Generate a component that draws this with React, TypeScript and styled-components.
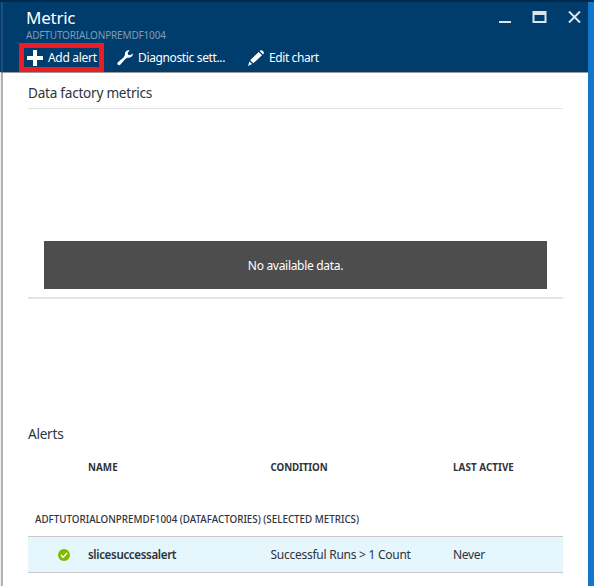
import React from "react";
import styled, { createGlobalStyle } from "styled-components";

const GlobalStyle = createGlobalStyle`
  * { box-sizing: border-box; }
  body { margin: 0; background: #fff; font-family: "Noto Sans", "Open Sans", sans-serif; overflow: hidden; }
`;

const Page = styled.div`
  display: grid;
  grid-template-columns: 1px 587px 6px;
  grid-template-rows: 2px 584px;
  width: 594px;
  height: 586px;
  background: #fff;
`;
const TopStrip = styled.div`
  grid-column: 1 / -1;
  background: #002b4e;
`;
const Edge = styled.div`
  background: linear-gradient(#003c6c 70px, #eeeeee 70px);
`;
const Desktop = styled.div`
  background: #1277cb;
`;
const Blade = styled.main`
  display: flex;
  flex-direction: column;
  border-left: 2px solid #b3b3b3;
`;
const Header = styled.header`
  height: 71px;
  margin-left: -2px;
  border-left: 2px solid #1f507b;
  border-bottom: 1px solid #9d9d9d;
  background: #003c6c;
  color: #fff;
`;
const TitleBar = styled.div`
  display: flex;
  justify-content: space-between;
  height: 41px;
  padding: 5px 7px 0 23px;
`;
const Text = styled.span<{ $size: number; $line: number; $track?: number; $weight?: number; $color?: string }>`
  display: block;
  white-space: nowrap;
  font-size: ${(p) => p.$size}px;
  line-height: ${(p) => p.$line}px;
  letter-spacing: ${(p) => p.$track ?? 0}px;
  font-weight: ${(p) => p.$weight ?? 400};
  color: ${(p) => p.$color ?? "inherit"};
`;
const WindowControls = styled.div`
  display: flex;
  align-items: flex-start;
  gap: 21px;
  padding-top: 4px;
  svg { display: block; }
`;
const Toolbar = styled.nav`
  display: flex;
  height: 29px;
`;
const Command = styled.button<{ $highlight?: boolean; $width: number }>`
  display: flex;
  align-items: center;
  width: ${(p) => p.$width}px;
  height: 29px;
  margin: 0 0 0 ${(p) => (p.$highlight ? 16 : 0)}px;
  padding: 0 0 0 ${(p) => (p.$highlight ? 3 : 13)}px;
  gap: 5px;
  border: ${(p) => (p.$highlight ? "5px solid #ed1c24" : "0")};
  background: transparent;
  color: #fff;
  font-family: inherit;
  text-align: left;
  svg { flex: none; display: block; }
`;
const Body = styled.div`
  width: 560px;
  padding-left: 25px;
  color: #2f333b;
`;
const SectionTitle = styled.h2<{ $top: number }>`
  margin: 0;
  padding-top: ${(p) => p.$top}px;
  font-weight: 400;
`;
const Chart = styled.section`
  height: 191px;
  margin-top: 5px;
  padding: 132px 16px 0;
  border-top: 1px solid #e4e4e4;
  border-bottom: 2px solid #e4e4e4;
`;
const EmptyMessage = styled.div`
  display: flex;
  align-items: center;
  justify-content: center;
  height: 48px;
  padding-top: 2px;
  background: #4d4d4d;
  color: #fff;
`;
const Row = styled.div`
  display: grid;
  grid-template-columns: 60px 182.5px 182.5px 1fr;
  align-items: center;
`;
const HeadRow = styled(Row)`
  height: 20px;
  margin-top: 14px;
`;
const GroupLabel = styled.div`
  margin-top: 32px;
  padding: 0 0 0 7px;
  height: 26px;
`;
const AlertRow = styled(Row)`
  height: 37px;
  background: #e5f6fd;
  border-top: 1px solid #c8c8c8;
  border-bottom: 1px solid #c8c8c8;
`;
const Status = styled.div`
  padding-left: 30px;
  svg { display: block; }
`;

const PlusIcon = () => (
  <svg width="16" height="16" viewBox="0 0 16 16" fill="#fff">
    <path d="M6 0h4v6h6v4h-6v6H6v-6H0V6h6z" />
  </svg>
);
const WrenchIcon = () => (
  <svg width="16" height="16" viewBox="0 0 16 16" fill="#fff">
    <path d="M12.500.4 10.700 2.800l.3 2 2 .5L15.800 3.600c.3 2.700-2.200 4.700-4.900 3.900L8.300 9.100l-4.800 5.500c-1.700 1.700-4.300-.6-2.600-2.300L6.500 7.500l1.400-2.200C7.300 2.300 9.600-.2 12.500.4z" />
  </svg>
);
const PencilIcon = () => (
  <svg width="16" height="16" viewBox="0 0 16 16" fill="#fff">
    <path d="m11.700 1.100.9-.8c1.400-.8 4 1.700 3.200 3.100l-.8 1zM10.700 2l3.300 3.300-8.700 8L2.200 10.200zM1.400 11.400l2.700 2.600L0 16z" />
  </svg>
);
const CheckIcon = () => (
  <svg width="12" height="12" viewBox="0 0 12 12">
    <circle cx="6" cy="6" r="6" fill="#7fba00" />
    <path d="m3 6 2.100 2.200 4-4.200" fill="none" stroke="#fff" strokeWidth="1.400" />
  </svg>
);

const ink = "#2f333b";

export default function App() {
  return (
    <>
      <GlobalStyle />
      <Page>
        <TopStrip />
        <Edge />
        <Blade>
          <Header>
            <TitleBar>
              <div>
                <Text $size={17} $line={22} $track={-0.25}>Metric</Text>
                <Text $size={10} $line={13} $track={-0.17} $color="#7f9db5">ADFTUTORIALONPREMDF1004</Text>
              </div>
              <WindowControls>
                <svg width="12" height="13" viewBox="0 0 12 13"><path d="M0 10h12v2H0z" fill="#dce5ec" /></svg>
                <svg width="15" height="13" viewBox="0 0 15 13"><path fillRule="evenodd" d="M.5 0h14v12H.5zM2.500 4v6h10V4z" fill="#dce5ec" /></svg>
                <svg width="13" height="13" viewBox="0 0 13 13"><path d="m1 .5 11 11M12 .5l-11 11" stroke="#dce5ec" strokeWidth="2" /></svg>
              </WindowControls>
            </TitleBar>
            <Toolbar>
              <Command $highlight $width={85}>
                <PlusIcon />
                <Text $size={12} $line={18} $track={-0.3}>Add alert</Text>
              </Command>
              <Command $width={131}>
                <WrenchIcon />
                <Text $size={12} $line={18} $track={-0.36}>Diagnostic sett...</Text>
              </Command>
              <Command $width={100}>
                <PencilIcon />
                <Text $size={12} $line={18} $track={-0.4}>Edit chart</Text>
              </Command>
            </Toolbar>
          </Header>
          <Body>
            <SectionTitle $top={10}>
              <Text $size={13.600} $line={20} $track={-0.25}>Data factory metrics</Text>
            </SectionTitle>
            <Chart>
              <EmptyMessage>
                <Text $size={12} $line={18} $track={-0.3}>No available data.</Text>
              </EmptyMessage>
            </Chart>
            <SectionTitle $top={125}>
              <Text $size={13.600} $line={20} $track={-0.25}>Alerts</Text>
            </SectionTitle>
            <HeadRow>
              <span />
              <Text $size={9.800} $line={14} $weight={700} $track={0.05} $color={ink}>NAME</Text>
              <Text $size={9.800} $line={14} $weight={700} $track={-0.1} $color={ink}>CONDITION</Text>
              <Text $size={9.800} $line={14} $weight={700} $track={0.08} $color={ink}>LAST ACTIVE</Text>
            </HeadRow>
            <GroupLabel>
              <Text $size={9.800} $line={20} $track={0} $weight={500}>ADFTUTORIALONPREMDF1004 (DATAFACTORIES) (SELECTED METRICS)</Text>
            </GroupLabel>
            <AlertRow>
              <Status><CheckIcon /></Status>
              <Text $size={11.600} $line={18} $track={-0.37} $weight={600}>slicesuccessalert</Text>
              <Text $size={12} $line={18} $track={-0.26}>Successful Runs &gt; 1 Count</Text>
              <Text $size={12} $line={18} $track={-0.3}>Never</Text>
            </AlertRow>
          </Body>
        </Blade>
        <Desktop />
      </Page>
    </>
  );
}
